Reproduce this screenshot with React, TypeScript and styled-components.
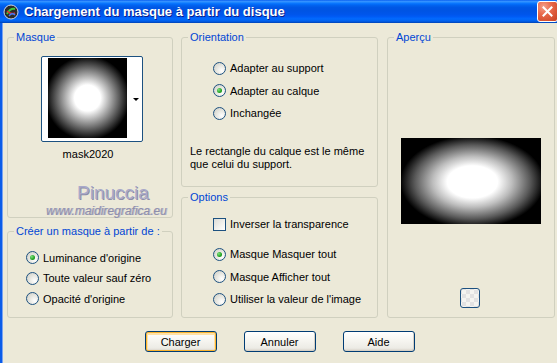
import React from "react";
import styled, { createGlobalStyle } from "styled-components";

const GlobalStyle = createGlobalStyle`
  html, body {
    margin: 0;
    padding: 0;
    background: #ece9d8;
  }
  body {
    font-family: "Liberation Sans", Arial, sans-serif;
    font-size: 11px;
    color: #000;
  }
`;

const Window = styled.div`
  width: 557px;
  height: 363px;
  display: flex;
  flex-direction: column;
  overflow: hidden;
`;

const TitleBar = styled.div`
  height: 23px;
  flex: none;
  display: flex;
  align-items: center;
  padding-left: 3px;
  gap: 5px;
  background: linear-gradient(
    to bottom,
    #0058ee 0%,
    #3a93ff 5%,
    #288eff 9%,
    #127dff 13%,
    #036ffc 17%,
    #0262ee 24%,
    #0057e5 33%,
    #0054e3 45%,
    #0055eb 62%,
    #005bf5 72%,
    #026afe 82%,
    #0062ef 90%,
    #0052d6 96%,
    #0040ab 100%
  );
`;

const TitleText = styled.div`
  flex: 1;
  color: #fff;
  font-weight: bold;
  font-size: 13px;
  text-shadow: 1px 1px 0 #0a1e8a;
  white-space: nowrap;
`;

const CloseButton = styled.div`
  width: 21px;
  height: 21px;
  margin-top: -1px;
  margin-right: -1px;
  box-sizing: border-box;
  border: 1px solid #fff;
  border-radius: 3px;
  background: radial-gradient(circle at 30% 25%, #f4a08a 0%, #e8684a 40%, #c8401f 100%);
  display: flex;
  align-items: center;
  justify-content: center;
`;

const Body = styled.div`
  flex: 1;
  border-left: 2px solid #0b5ce8;
  box-shadow: inset 1px 0 0 #7aa3f0;
  background: #ece9d8;
  padding: 8px 0 0 5px;
  display: flex;
  flex-direction: column;
`;

const Columns = styled.div`
  display: flex;
  align-items: flex-start;
`;

const Column = styled.div<{ $w: number; $gap: number; $mr?: number }>`
  width: ${(p) => p.$w}px;
  display: flex;
  flex-direction: column;
  gap: ${(p) => p.$gap}px;
  margin-right: ${(p) => p.$mr ?? 0}px;
`;

const Group = styled.fieldset<{ $h: number }>`
  margin: 0;
  padding: 0;
  min-width: 0;
  box-sizing: border-box;
  height: ${(p) => p.$h}px;
  border: 1px solid #d0d0bf;
  border-radius: 3px;
  display: flex;
  flex-direction: column;
`;

const Legend = styled.legend`
  margin-left: 6px;
  padding: 0 2px;
  color: #0046d5;
  font-size: 11px;
  line-height: 13px;
`;

const Thumb = styled.div`
  margin: 12px 0 0 33px;
  width: 102px;
  height: 86px;
  box-sizing: border-box;
  border: 1px solid #1c5180;
  border-radius: 2px;
  background: #fff;
  display: flex;
  padding: 1px 0 0 6px;
`;

const ThumbImage = styled.div`
  width: 79px;
  height: 80px;
  background: radial-gradient(circle at 50% 50%, #fff 0px, #fff 13px, #000 42px);
`;

const ThumbArrow = styled.div`
  flex: 1;
  display: flex;
  align-items: center;
  justify-content: center;
  padding-left: 3px;
  &::after {
    content: "";
    border-left: 3px solid transparent;
    border-right: 3px solid transparent;
    border-top: 3px solid #000;
  }
`;

const Caption = styled.div`
  margin-top: 6px;
  padding-right: 4px;
  text-align: center;
  line-height: 13px;
`;

const Watermark = styled.div`
  margin-top: 21px;
  padding-left: 69px;
  font-size: 19px;
  line-height: 21px;
  color: #a9a9c9;
  text-shadow: 1px 1px 0 #8d8da8;
`;

const WatermarkUrl = styled.div`
  margin-top: 2px;
  padding-left: 38px;
  font-size: 12px;
  font-style: italic;
  line-height: 13px;
  color: #8e8eaa;
  text-shadow: 1px 0 0 #b8b8cc;
`;

const OptionList = styled.div<{ $top: number; $left: number }>`
  display: flex;
  flex-direction: column;
  padding: ${(p) => p.$top}px 0 0 ${(p) => p.$left}px;
`;

const OptionRow = styled.div<{ $h: number; $mt?: number }>`
  height: ${(p) => p.$h}px;
  margin-top: ${(p) => p.$mt ?? 0}px;
  display: flex;
  align-items: center;
  gap: 4px;
  white-space: nowrap;
`;

const Radio = styled.span<{ $checked?: boolean }>`
  width: 13px;
  height: 13px;
  flex: none;
  box-sizing: border-box;
  border: 1px solid #1c5180;
  border-radius: 50%;
  background: radial-gradient(circle at 70% 70%, #fff 0%, #e8e8e2 45%, #cbcbc2 100%);
  display: flex;
  align-items: center;
  justify-content: center;
  &::after {
    content: "";
    display: ${(p) => (p.$checked ? "block" : "none")};
    width: 5px;
    height: 5px;
    border-radius: 50%;
    background: radial-gradient(circle at 35% 35%, #7fe27f 0%, #21a121 60%, #188a18 100%);
  }
`;

const Checkbox = styled.span`
  width: 13px;
  height: 13px;
  flex: none;
  box-sizing: border-box;
  border: 1px solid #1c5180;
  background: linear-gradient(135deg, #dcdcd7 0%, #f2f2ee 60%, #fff 100%);
`;

const Note = styled.div`
  margin: 21px 0 0 8px;
  line-height: 13px;
`;

const Preview = styled.div`
  align-self: center;
  margin-top: 94px;
  width: 140px;
  height: 86px;
  background: radial-gradient(
    ellipse 72px 46px at 51% 51%,
    #fff 0%,
    #fff 35%,
    #bdbdbd 55%,
    #5a5a5a 80%,
    #000 100%
  );
`;

const SmallButton = styled.div`
  align-self: center;
  margin-top: 64px;
  margin-left: -2px;
  width: 20px;
  height: 20px;
  box-sizing: border-box;
  border: 1px solid #1c5180;
  border-radius: 3px;
  background-color: #f4f4f0;
  background-image: linear-gradient(45deg, #e2e2e2 25%, transparent 25%, transparent 75%, #e2e2e2 75%),
    linear-gradient(45deg, #e2e2e2 25%, transparent 25%, transparent 75%, #e2e2e2 75%);
  background-size: 8px 8px;
  background-position: 1px 1px, 5px 5px;
`;

const ButtonRow = styled.div`
  margin-top: 13px;
  padding-right: 5px;
  display: flex;
  justify-content: center;
  gap: 27px;
`;

const Button = styled.div<{ $default?: boolean }>`
  width: 72px;
  height: 21px;
  box-sizing: border-box;
  border: 1px solid #003c74;
  border-radius: 3px;
  background: linear-gradient(to bottom, #fff 0%, #f5f4ef 50%, #ecebe5 85%, #d6d0c5 100%);
  box-shadow: ${(p) =>
    p.$default ? "inset 0 0 0 1px #f8b330, inset 0 1px 0 2px #ffe1a6" : "inset -1px -1px 0 #d6d0c5"};
  display: flex;
  align-items: center;
  justify-content: center;
  font-size: 11px;
`;

const TitleIcon = () => (
  <svg width="16" height="16" viewBox="0 0 16 16">
    <circle cx="8" cy="8" r="7" fill="#2a2a2a" stroke="#cfd8e8" strokeWidth="1" />
    <path d="M4 10 Q7 4 12 5" stroke="#3cc83c" strokeWidth="2" fill="none" />
    <path d="M4 7 Q8 11 12 9" stroke="#e03030" strokeWidth="1.6" fill="none" />
    <path d="M6 12 Q9 8 12 11" stroke="#3a7cff" strokeWidth="1.4" fill="none" />
  </svg>
);

const CloseIcon = () => (
  <svg width="11" height="11" viewBox="0 0 11 11">
    <path d="M1.5 1.5 L9.5 9.5 M9.5 1.5 L1.5 9.5" stroke="#fff" strokeWidth="2" strokeLinecap="square" />
  </svg>
);

const App = () => {
  return (
    <>
      <GlobalStyle />
      <Window>
        <TitleBar>
          <TitleIcon />
          <TitleText>Chargement du masque à partir du disque</TitleText>
          <CloseButton>
            <CloseIcon />
          </CloseButton>
        </TitleBar>
        <Body>
          <Columns>
            <Column $w={166} $gap={7} $mr={8}>
              <Group $h={187}>
                <Legend>Masque</Legend>
                <Thumb>
                  <ThumbImage />
                  <ThumbArrow />
                </Thumb>
                <Caption>mask2020</Caption>
                <Watermark>Pinuccia</Watermark>
                <WatermarkUrl>www.maidiregrafica.eu</WatermarkUrl>
              </Group>
              <Group $h={93}>
                <Legend>Créer un masque à partir de :</Legend>
                <OptionList $top={9} $left={18}>
                  <OptionRow $h={21}>
                    <Radio $checked />
                    Luminance d'origine
                  </OptionRow>
                  <OptionRow $h={20}>
                    <Radio />
                    Toute valeur sauf zéro
                  </OptionRow>
                  <OptionRow $h={21}>
                    <Radio />
                    Opacité d'origine
                  </OptionRow>
                </OptionList>
              </Group>
            </Column>
            <Column $w={197} $gap={4} $mr={9}>
              <Group $h={156}>
                <Legend>Orientation</Legend>
                <OptionList $top={13} $left={31}>
                  <OptionRow $h={22}>
                    <Radio />
                    Adapter au support
                  </OptionRow>
                  <OptionRow $h={23}>
                    <Radio $checked />
                    Adapter au calque
                  </OptionRow>
                  <OptionRow $h={22}>
                    <Radio />
                    Inchangée
                  </OptionRow>
                </OptionList>
                <Note>
                  Le rectangle du calque est le même
                  <br />
                  que celui du support.
                </Note>
              </Group>
              <Group $h={127}>
                <Legend>Options</Legend>
                <OptionList $top={9} $left={31}>
                  <OptionRow $h={22}>
                    <Checkbox />
                    Inverser la transparence
                  </OptionRow>
                  <OptionRow $h={22} $mt={8}>
                    <Radio $checked />
                    Masque Masquer tout
                  </OptionRow>
                  <OptionRow $h={23}>
                    <Radio />
                    Masque Afficher tout
                  </OptionRow>
                  <OptionRow $h={22}>
                    <Radio />
                    Utiliser la valeur de l'image
                  </OptionRow>
                </OptionList>
              </Group>
            </Column>
            <Column $w={168} $gap={0}>
              <Group $h={287}>
                <Legend>Aperçu</Legend>
                <Preview />
                <SmallButton />
              </Group>
            </Column>
          </Columns>
          <ButtonRow>
            <Button $default>Charger</Button>
            <Button>Annuler</Button>
            <Button>Aide</Button>
          </ButtonRow>
        </Body>
      </Window>
    </>
  );
};

export default App;
